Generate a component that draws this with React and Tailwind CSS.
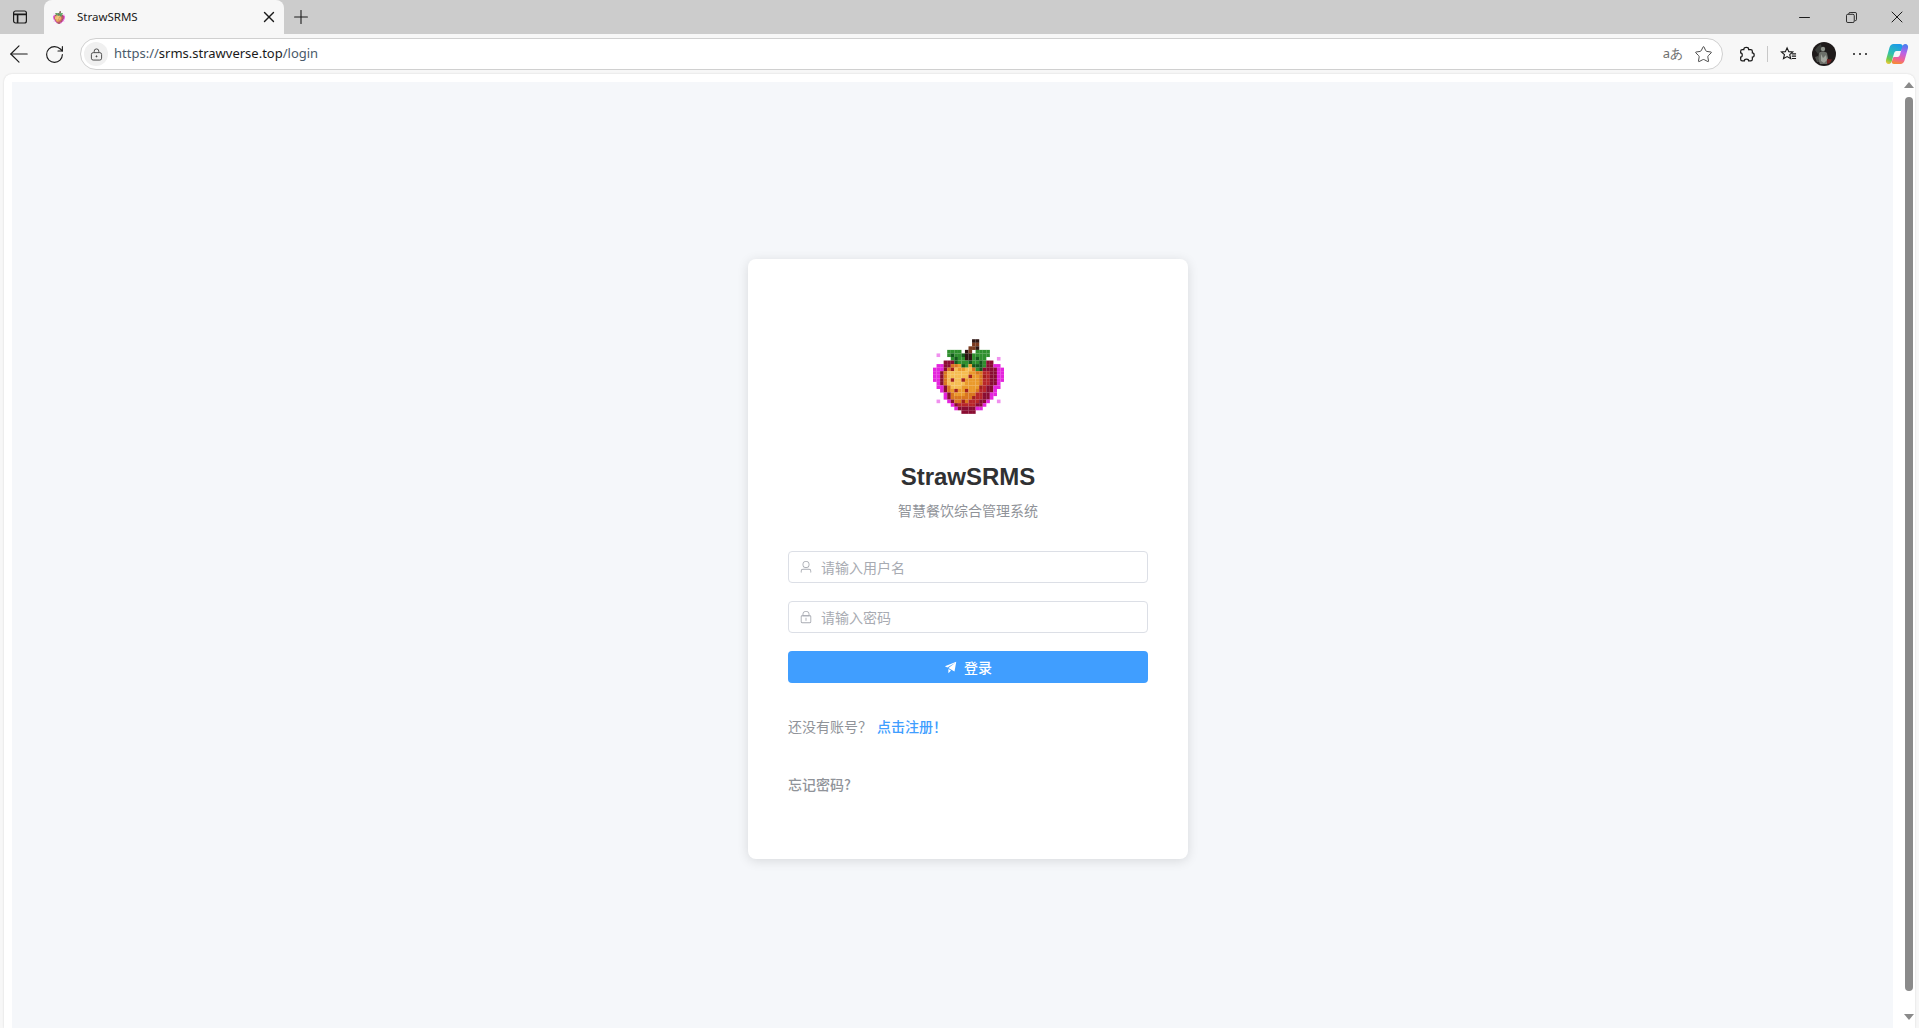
import { X, Plus, Minus, ArrowLeft, RotateCw, Star } from 'lucide-react'

const BERRY = [
  '...........kk.......',
  '...........bb.......',
  '..........bbk.......',
  '....gggg.kb.gggg....',
  '.p..gGggGkkggggg....',
  '.....gGggkkgGgg...p.',
  '...dddGgggGggGgdd...',
  '.mmddnnoGgoGGGgddmm.',
  'mmmdnsyooyyngGddddmm',
  'mmdnyyyyyyoonnrrddmm',
  'mmdnyyyyyysoonsrddmm',
  'mmdnysyysoooonrrddmm',
  '.mdnyyyyyoooonrrddm.',
  '.mmdnyyyooooosrddmm.',
  '..mdnosoosoonrrddm..',
  '...mdnooonnnrrddmm..',
  '...mdnnnnnnsrrddm...',
  '.p..mdnnsnrrrddm..p.',
  '.....mdrrrrrddm.....',
  '......mdddddmm......',
  '........dddd........',
]

const BERRY_COLORS = {
  m: '#e425dc',
  p: '#f090ee',
  d: '#8a0d32',
  r: '#b8262a',
  n: '#d9761f',
  o: '#ea9a2c',
  y: '#f5bd52',
  s: '#a3201c',
  g: '#2f8f2e',
  G: '#14591c',
  b: '#7a3a20',
  k: '#2e1512',
}

function Berry({ className }) {
  return (
    <svg viewBox="0 0 20 21" className={className}>
      {BERRY.map((row, y) =>
        row.split('').map((c, x) =>
          c === '.' ? null : <rect key={x + '-' + y} x={x} y={y} width="1.02" height="1.02" fill={BERRY_COLORS[c]} />
        )
      )}
    </svg>
  )
}

function UserIcon() {
  return (
    <svg viewBox="0 0 1024 1024" className="w-[14px] h-[14px]" fill="#a8abb2">
      <path d="M512 512a192 192 0 1 0 0-384 192 192 0 0 0 0 384m0 64a256 256 0 1 1 0-512 256 256 0 0 1 0 512m320 320v-96a96 96 0 0 0-96-96H288a96 96 0 0 0-96 96v96a32 32 0 1 1-64 0v-96a160 160 0 0 1 160-160h448a160 160 0 0 1 160 160v96a32 32 0 1 1-64 0" />
    </svg>
  )
}

function LockIcon() {
  return (
    <svg viewBox="0 0 1024 1024" className="w-[14px] h-[14px]" fill="#a8abb2">
      <path d="M224 448a32 32 0 0 0-32 32v384a32 32 0 0 0 32 32h576a32 32 0 0 0 32-32V480a32 32 0 0 0-32-32zm0-64h576a96 96 0 0 1 96 96v384a96 96 0 0 1-96 96H224a96 96 0 0 1-96-96V480a96 96 0 0 1 96-96" />
      <path d="M512 544a32 32 0 0 1 32 32v192a32 32 0 1 1-64 0V576a32 32 0 0 1 32-32m192-160v-64a192 192 0 1 0-384 0v64zM512 64a256 256 0 0 1 256 256v128H256V320A256 256 0 0 1 512 64" />
    </svg>
  )
}

function SendIcon() {
  return (
    <svg viewBox="0 0 1024 1024" className="w-[14px] h-[14px]" fill="#ffffff">
      <path d="m64 448 832-320-128 704-446.08-243.328L832 192 242.816 545.472zm256 512V657.024L512 768z" />
    </svg>
  )
}

function Field({ icon, placeholder }) {
  return (
    <div className="h-8 flex items-center px-[10px] bg-white border border-[#dcdfe6] rounded-[4px]">
      {icon}
      <span className="ml-[8px] text-[14px] text-[#a8abb2]">{placeholder}</span>
    </div>
  )
}

function CopilotIcon() {
  return (
    <svg viewBox="0 0 24 22" className="w-[24px] h-[22px]">
      <defs>
        <linearGradient id="cpLeft" x1="0.6" y1="0" x2="0.2" y2="1">
          <stop offset="0" stopColor="#1d9be8" />
          <stop offset="0.5" stopColor="#2fc0b0" />
          <stop offset="0.8" stopColor="#6fcb4a" />
          <stop offset="1" stopColor="#e6c93a" />
        </linearGradient>
        <linearGradient id="cpRight" x1="0.6" y1="0" x2="0.4" y2="1">
          <stop offset="0" stopColor="#4a7cf0" />
          <stop offset="0.4" stopColor="#b862e8" />
          <stop offset="0.75" stopColor="#f0609a" />
          <stop offset="1" stopColor="#f58a3a" />
        </linearGradient>
      </defs>
      <path d="M8.500 1H15C17 1 18 2.500 18 4.500L16 8H11.500C10 8 9.500 9 9 10.500L7 17.500C6.500 19.500 5.500 21 3.800 21 1.500 21 .5 19 1 17L4.500 4.500C5.200 2.200 6.500 1 8.500 1z" fill="url(#cpLeft)" />
      <path d="M15.500 21H9C7 21 6.500 19.500 7 18L8.500 14H12.500C14 14 14.500 13 15 11.500L17 4.500C17.500 2.500 18.500 1 20.200 1 22.500 1 23.500 3 23 5L19.500 17.500C18.800 19.800 17.500 21 15.500 21z" fill="url(#cpRight)" />
    </svg>
  )
}

function Avatar() {
  return (
    <svg viewBox="0 0 24 24" className="w-[24px] h-[24px] ml-[15px]">
      <circle cx="12" cy="12" r="12" fill="#1f1b1b" />
      <path d="M3 8c2-3 4-5 6-6l1 5-4 5z" fill="#3a3d3a" />
      <circle cx="11" cy="7" r="2.200" fill="#8f948c" />
      <path d="M7 11c1-2 6-2 8 0l1 5 -1 6H8L6 17z" fill="#6c6f69" />
      <path d="M9 12l2 4 3-3 1 5-3 3-3-2z" fill="#a2a59d" />
      <path d="M3 15l3-1 1 6-2 0z" fill="#4d4f4b" />
      <path d="M15 17l5 .5-2 3.500-3 1z" fill="#6e2424" />
    </svg>
  )
}

function BrowserChrome() {
  return (
    <div className="font-['Noto_Sans',sans-serif]">
      <div className="h-[34px] bg-[#cccccc] flex items-end">
        <div className="w-[44px] h-[34px] flex items-center justify-center">
          <svg viewBox="0 0 16 16" className="w-[16px] h-[16px] ml-[-5px]" fill="none" stroke="#1a1a1a" strokeWidth="1.2">
            <rect x="1.6" y="2" width="12.8" height="12" rx="2" />
            <path d="M1.6 5.400h12.800M5.600 5.400V14" strokeWidth="1.600" />
          </svg>
        </div>
        <div className="w-[240px] h-[34px] bg-[#f7f7f7] rounded-t-[8px] flex items-center pl-[9px] pr-[6px]">
          <Berry className="w-[12px] h-[13px]" />
          <span className="ml-[12px] text-[11.5px] text-[#1a1a1a] flex-1">StrawSRMS</span>
          <X size={18} strokeWidth={1.8} className="text-[#1a1a1a]" />
        </div>
        <div className="h-[34px] flex items-center ml-[6px]">
          <Plus size={22} strokeWidth={1.2} className="text-[#1a1a1a]" />
        </div>
        <div className="flex-1" />
        <div className="h-[34px] flex items-center pr-[12px] text-[#1a1a1a]">
          <Minus size={17} strokeWidth={1.4} />
          <svg viewBox="0 0 12 12" className="w-[11px] h-[11px] ml-[33px]" fill="none" stroke="#1a1a1a" strokeWidth="1">
            <rect x="0.5" y="2.5" width="8.5" height="9" rx="1.5" />
            <path d="M3 2.200V2a1.500 1.500 0 0 1 1.500-1.500H10A1.500 1.500 0 0 1 11.500 2v6A1.500 1.500 0 0 1 10 9.500" />
          </svg>
          <X size={20} strokeWidth={1.2} className="ml-[30px]" />
        </div>
      </div>
      <div className="h-[40px] bg-[#f7f7f7] flex items-center">
        <div className="w-[80px] flex items-center pl-[5px] gap-[11px] text-[#1a1a1a]">
          <ArrowLeft size={28} strokeWidth={1} />
          <RotateCw size={21} strokeWidth={1.3} />
        </div>
        <div className="w-[1643px] h-[32px] bg-white border border-[#d0d0d0] rounded-full flex items-center pl-[3px] pr-[9px]">
          <div className="w-[24px] h-[24px] rounded-full bg-[#f0f0f0] flex items-center justify-center">
            <svg viewBox="0 0 14 14" className="w-[13px] h-[13px]" fill="none" stroke="#444444" strokeWidth="1">
              <rect x="1.5" y="5" width="11" height="8" rx="2" />
              <path d="M4.500 5V3.500a2.500 2.500 0 0 1 5 0V5" />
              <circle cx="7" cy="9" r="0.6" fill="#444444" />
            </svg>
          </div>
          <span className="ml-[6px] text-[13px] text-[#4a5a6a]">
            https://<span className="text-[#1a1a1a]">srms.strawverse.top</span>/login
          </span>
          <div className="flex-1" />
          <span className="text-[13px] text-[#707070] mr-[11px]">aあ</span>
          <Star size={19} strokeWidth={1.2} className="text-[#444444]" />
        </div>
        <div className="flex items-center ml-[15px] text-[#1a1a1a]">
          <svg viewBox="0 0 16 16" className="w-[17px] h-[17px]" fill="none" stroke="#1a1a1a" strokeWidth="1.150">
            <path d="M5.500 3C5.500.8 10 .8 10 3V3.500H12C13 3.500 13.500 4 13.500 5V6.500C15.800 6.500 15.800 10.500 13.500 10.500V12.500C13.500 13.500 13 14 12 14H10C10 11.800 6 11.800 6 14H4C3 14 2.500 13.500 2.500 12.500V10.500C4.500 10.500 4.500 6.500 2.500 6.500V5C2.500 4 3 3.500 4 3.500H5.500Z" />
          </svg>
          <div className="w-px h-[16px] bg-[#c8c8c8] ml-[12px] mr-[12px]" />
          <svg viewBox="0 0 18 16" className="w-[17px] h-[16px]" fill="none" stroke="#1a1a1a" strokeWidth="1.2">
            <path d="M7.500 1.500l1.800 4 4.200.4-3.200 2.800 1 4.200-3.800-2.200-3.800 2.200 1-4.200L1.500 5.900l4.200-.4z" />
            <path d="M12.500 7.800h4.500M12.500 10.300h4.500M12.500 12.800h4.500" />
          </svg>
          <Avatar />
          <div className="ml-[17px] w-[14px] flex justify-between">
            <div className="w-[2px] h-[2px] bg-[#1a1a1a] rounded-full" />
            <div className="w-[2px] h-[2px] bg-[#1a1a1a] rounded-full" />
            <div className="w-[2px] h-[2px] bg-[#1a1a1a] rounded-full" />
          </div>
          <div className="ml-[18px]">
            <CopilotIcon />
          </div>
        </div>
      </div>
    </div>
  )
}

function LoginCard() {
  return (
    <div className="w-[440px] h-[600px] bg-white rounded-[8px] shadow-[0_2px_12px_rgba(0,0,0,0.12)] px-[40px] pt-[80px]">
      <div className="flex justify-center">
        <Berry className="w-[71px] h-[75px]" />
      </div>
      <h1 className="mt-[47px] text-center text-[24px] leading-[32px] font-bold text-[#303133] font-['Liberation_Sans',sans-serif]">
        StrawSRMS
      </h1>
      <p className="mt-[7px] text-center text-[14px] leading-[20px] text-[#909399]">智慧餐饮综合管理系统</p>
      <div className="mt-[31px] flex flex-col gap-[18px]">
        <Field icon={<UserIcon />} placeholder="请输入用户名" />
        <Field icon={<LockIcon />} placeholder="请输入密码" />
        <button className="h-8 bg-[#409eff] rounded-[4px] flex items-center justify-center text-white text-[14px] font-medium">
          <SendIcon />
          <span className="ml-[6px]">登录</span>
        </button>
      </div>
      <div className="mt-[33px] flex items-center text-[14px] leading-[20px]">
        <span className="text-[#909399]">还没有账号？</span>
        <span className="ml-[5px] text-[#409eff] font-medium">点击注册！</span>
      </div>
      <div className="mt-[38px] text-[14px] leading-[20px] text-[#909399] font-medium">忘记密码?</div>
    </div>
  )
}

function Scrollbar() {
  return (
    <div className="w-[22px] flex flex-col items-center pb-[8px] pl-[9px]">
      <div className="w-0 h-0 border-x-[5px] border-x-transparent border-b-[6px] border-b-[#8a8a8a]" />
      <div className="w-[8px] mt-[9px] flex-1 bg-[#8a8a8a] rounded-full" />
      <div className="w-0 h-0 mt-[23px] border-x-[5px] border-x-transparent border-t-[6px] border-t-[#8a8a8a]" />
    </div>
  )
}

export default function App() {
  return (
    <div className="h-screen flex flex-col bg-[#f7f7f7] overflow-hidden font-['Noto_Sans_CJK_SC','Noto_Sans',sans-serif]">
      <BrowserChrome />
      <div className="flex-1 min-h-0 mx-[4px] bg-white rounded-t-[8px] flex pl-[8px] pt-[8px] shadow-[0_0_2px_rgba(0,0,0,0.15)]">
        <div className="flex-1 bg-[#f5f7fa] flex justify-center pt-[177px] pl-[31px]">
          <LoginCard />
        </div>
        <Scrollbar />
      </div>
    </div>
  )
}
